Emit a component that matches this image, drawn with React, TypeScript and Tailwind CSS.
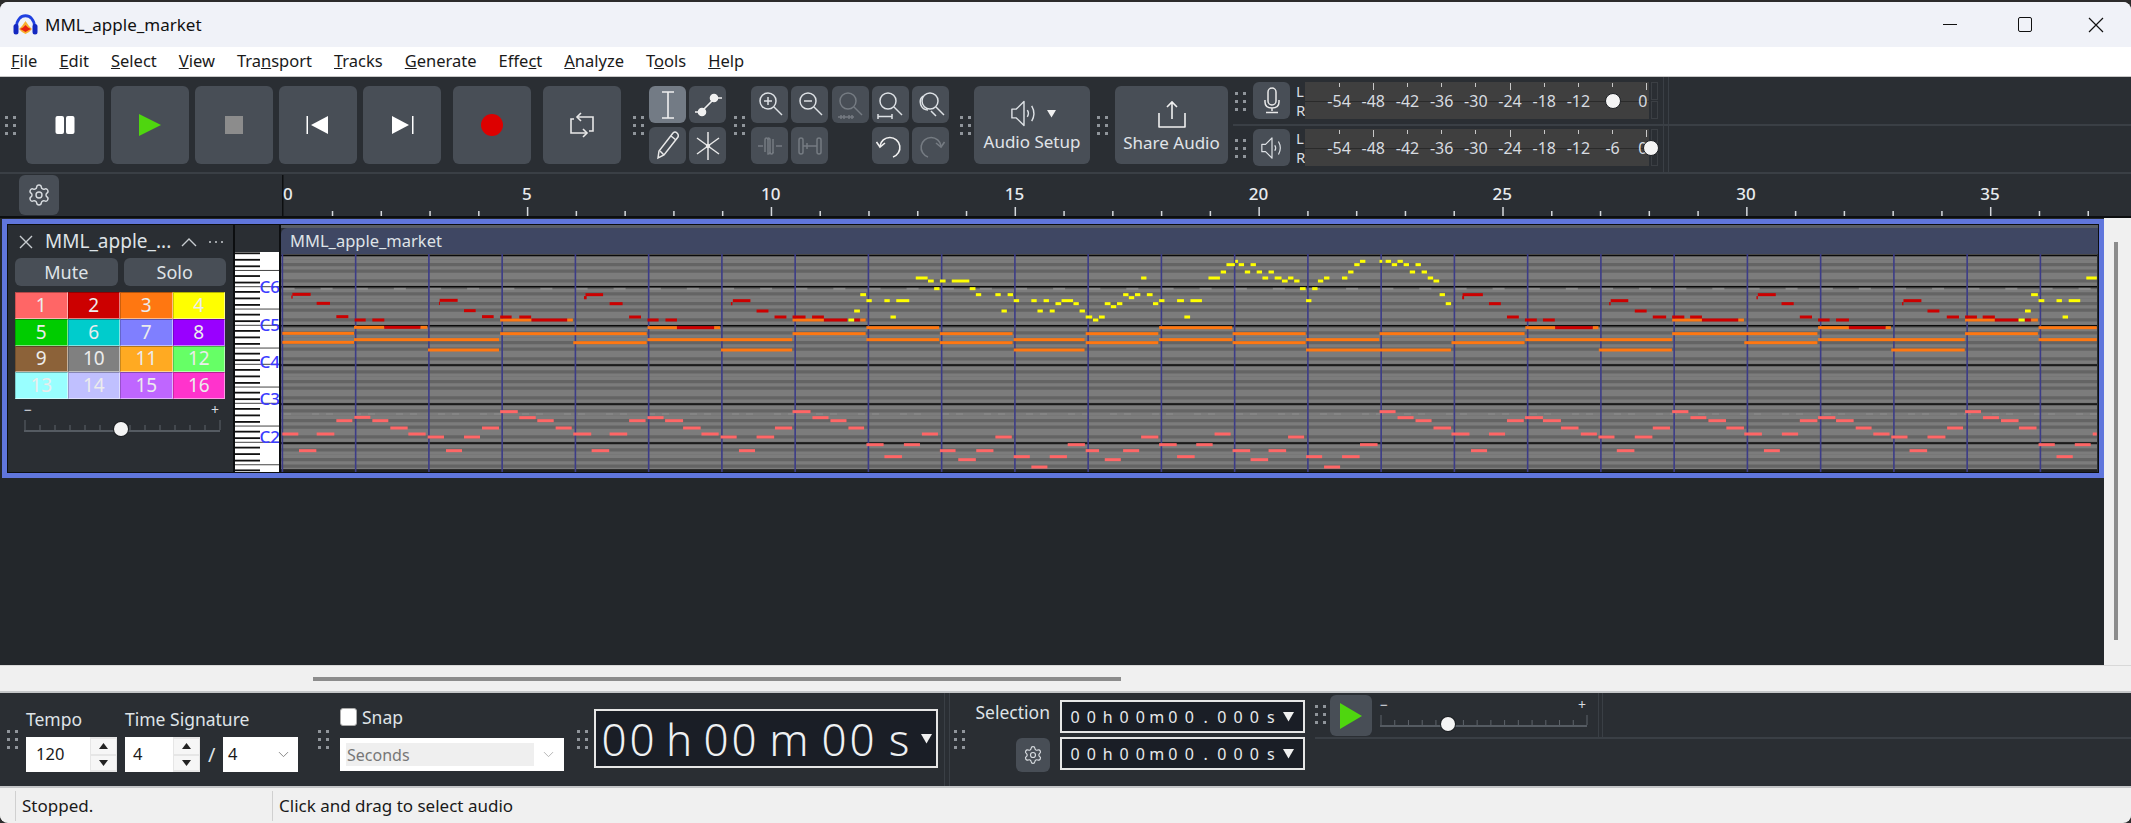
import React from "react";
import { ChevronDown, Settings } from "lucide-react";

type N = number[];
const conv = (list: N[], ox: number, sx: number, oy: number) =>
  list.map(([a, b, y]) => ({ x: ox + a / sx - 282, w: (b - a) / sx, y: oy + y / 3 - 254 }));

const RED = [
  ...conv([[880,935,238],[953,993,265],[1012,1048,305],[1067,1100,315],[1120,1156,315],[1156,1264,337],[1322,1376,256],[1395,1430,287],[1449,1484,305]],0,3,215),
  ...conv([[3,33,291],[53,84,291],[85,178,300],[226,272,224],[289,323,251],[340,371,291],[388,417,300],[435,465,300],[465,562,323],[611,657,242],[673,704,273],[720,751,291],[767,801,291],[818,849,291],[849,910,300],[928,943,300]],500,2.613,220),
  ...conv([[950,1003,224],[1019,1050,251],[1066,1097,291],[1113,1144,300],[1160,1191,300],[1192,1290,323],[1337,1383,242],[1400,1431,273],[1447,1482,291]],1100,2.613,220),
  ...conv([[216,252,291],[269,304,291],[304,411,300],[469,522,224],[539,575,251],[593,629,291],[647,681,300],[700,738,300],[738,846,323],[899,952,242],[970,1005,273],[1027,1063,291],[1081,1116,291],[1133,1169,291],[1169,1239,300],[1258,1275,300]],1600,2.953,220),
];
const TAILS = [
  ...conv([[877,881,246],[1320,1323,265]],0,3,215),
  ...conv([[222,229,233],[606,610,251]],500,2.613,220),
  ...conv([[949,954,233],[1333,1337,251]],1100,2.613,220),
  ...conv([[465,469,233],[895,899,251]],1600,2.953,220),
];
const ORANGE = [
  ...conv([[850,1065,355],[850,1065,382],[1065,1156,337],[1264,1285,337],[1065,1500,374],[1287,1500,405]],0,3,215),
  ...conv([[3,85,300],[178,193,300],[3,386,341],[194,386,368],[388,465,323],[562,578,323],[388,766,359],[580,766,390],[767,849,300],[944,958,300],[767,958,341],[960,1150,323],[960,1150,359],[1152,1342,341],[1152,1342,368],[1345,1530,359],[1345,1530,390],[1533,1568,341],[1533,1568,368]],500,2.613,220),
  ...conv([[0,155,341],[0,155,368],[157,348,323],[157,348,359],[349,540,341],[349,540,368],[541,732,359],[541,920,390],[733,1112,341],[921,1112,368],[1114,1192,323],[1290,1305,323],[1114,1497,359],[1306,1497,390]],1100,2.613,220),
  ...conv([[216,304,300],[411,428,300],[216,645,341],[429,645,368],[647,738,323],[846,862,323],[647,1080,359],[863,1080,390],[1081,1169,300],[1276,1296,300],[1081,1296,341],[1298,1470,323],[1298,1470,359]],1600,2.953,220),
];
const YELLOW = [
  ...conv([[913,928,300],[928,943,273],[944,959,224],[960,974,242],[1007,1021,242],[1023,1037,291],[1038,1072,242],[1089,1120,174],[1121,1136,183],[1137,1151,206],[1152,1167,183],[1183,1229,183],[1230,1245,206],[1246,1260,224],[1297,1311,224],[1313,1327,273],[1329,1343,224],[1345,1359,242],[1391,1405,242],[1407,1421,273],[1423,1437,242],[1439,1452,273],[1454,1469,251],[1470,1500,242],[1501,1515,251],[1517,1531,273],[1533,1550,291],[1552,1566,300]],500,2.613,220),
  ...conv([[0,15,291],[15,30,251],[31,45,260],[47,61,251],[63,77,224],[78,92,233],[94,108,224],[110,124,174],[125,140,224],[141,155,251],[157,171,242],[204,222,242],[223,238,291],[239,269,242],[286,316,174],[318,332,156],[333,355,134],[356,363,124],[365,379,134],[381,395,156],[396,410,134],[412,426,156],[427,442,174],[443,457,156],[459,477,174],[478,493,183],[494,508,174],[510,524,183],[525,540,206],[541,555,242],[557,571,206],[572,586,183],[588,602,174],[635,649,174],[651,665,156],[667,681,134],[682,696,124],[733,740,124],[749,763,124],[765,779,134],[780,794,124],[796,810,134],[812,826,156],[827,841,134],[843,857,156],[859,873,174],[874,889,183],[890,904,224],[906,920,251]],1100,2.613,220),
  ...conv([[1239,1257,300],[1258,1275,273],[1276,1296,224],[1298,1315,242],[1351,1367,242],[1369,1385,291],[1387,1421,242],[1439,1470,174]],1600,2.953,220),
];
const SALMON = [
  ...conv([[850,898,657],[900,952,707],[953,1006,657],[1012,1060,617],[1066,1114,607],[1120,1168,617],[1174,1226,639],[1228,1280,657],[1286,1335,666],[1341,1389,707],[1395,1443,666],[1449,1500,639]],0,3,215),
  ...conv([[3,49,575],[53,96,593],[100,143,602],[148,190,624],[194,241,642],[242,288,692],[289,335,642],[340,383,602],[388,430,593],[434,481,602],[481,527,624],[529,574,642],[579,621,651],[627,669,692],[673,719,651],[721,766,624],[767,814,575],[819,861,593],[866,908,602],[913,954,624],[960,1005,674],[1007,1053,710],[1058,1100,674],[1105,1147,642],[1152,1193,692],[1200,1246,719],[1247,1292,692],[1297,1340,651],[1345,1387,710],[1391,1433,741],[1439,1484,710],[1486,1531,674],[1533,1568,692]],500,2.613,220),
  ...conv([[15,57,719],[63,105,692],[110,155,651],[157,203,674],[204,250,710],[254,297,674],[302,344,642],[349,395,692],[396,442,719],[443,489,692],[494,536,651],[541,583,710],[588,630,741],[635,681,710],[682,728,674],[733,775,575],[780,822,593],[827,869,602],[874,920,624],[921,968,642],[972,1014,692],[1019,1061,642],[1066,1110,602],[1113,1160,593],[1160,1207,602],[1207,1253,624],[1259,1301,642],[1305,1347,651],[1353,1399,692],[1400,1446,651],[1447,1492,624]],1100,2.613,220),
  ...conv([[216,264,575],[270,317,593],[323,375,602],[376,428,624],[429,481,642],[487,534,692],[540,588,642],[593,645,602],[647,698,593],[700,752,602],[758,805,624],[810,858,642],[863,911,651],[917,969,692],[970,1023,651],[1028,1075,624],[1081,1128,575],[1134,1181,593],[1187,1239,602],[1240,1292,624],[1298,1346,674],[1351,1399,710],[1405,1452,674],[1458,1470,642]],1600,2.953,220),
];

const STROKE = "#dde1e5";
const DIM = "#757b82";

function Gripper({ className = "" }: { className?: string }) {
  return (
    <div className={`grid w-[11px] shrink-0 grid-cols-2 gap-x-[5px] gap-y-[5px] self-start ${className}`}>
      {[0, 1, 2, 3, 4, 5].map((i) => (
        <div key={i} className="h-[3px] w-[3px] bg-[#90959b]" />
      ))}
    </div>
  );
}

function Btn({ children, className = "" }: { children?: React.ReactNode; className?: string }) {
  return <div className={`flex shrink-0 items-center justify-center rounded-md bg-[#484e56] ${className}`}>{children}</div>;
}

const Logo = () => (
  <svg width="25" height="21" viewBox="0 0 25 21">
    <path d="M3.500 13C3.500-2 21.500-2 21.500 13" fill="none" stroke="#2040e0" strokeWidth="2.800" />
    <rect x="0.500" y="10" width="5" height="10.500" rx="2.500" fill="#1428c0" />
    <rect x="19.500" y="10" width="5" height="10.500" rx="2.500" fill="#1428c0" />
    <path d="M6 15l3-3 3.500-5 3.500 5 3 3-3 3-3.500 2-3.500-2z" fill="#f8b030" />
    <path d="M7 15l3-1.500 2.500-2.500 2.500 2.500 3 1.500-3 1.500-2.500 1.500-2.500-1.500z" fill="#e82010" />
  </svg>
);

const Speaker = ({ color = STROKE, w = 26, h = 30 }: { color?: string; w?: number; h?: number }) => (
  <svg width={w} height={h} viewBox="0 0 26 30" fill="none" stroke={color} strokeWidth="1.300">
    <path d="M2 11h4l7-7v22l-7-7H2z" strokeLinejoin="round" />
    <path d="M16 12q2 3 0 6" />
    <path d="M20 8q4 7 0 14" />
  </svg>
);

const Mag = ({ children, color = STROKE }: { children?: React.ReactNode; color?: string }) => (
  <svg width="28" height="30" viewBox="0 0 28 30" fill="none" stroke={color} strokeWidth="1.500">
    <circle cx="12" cy="11" r="8" />
    <path d="M18 17l8 8" />
    {children}
  </svg>
);

function NoteGrid() {
  const W = 1816;
  const H = 218;
  const lines = [0.7, 32, 71, 110.3, 149.300, 188.300, 215.300];
  const rows: number[] = [];
  const blackFromBottom = new Set([1, 3, 6, 8, 10]);
  for (let i = 0; i < 68; i++) {
    const semi = ((i % 12) + 12) % 12;
    if (!blackFromBottom.has(semi)) rows.push(H - 3.25 * (i + 1) - 1);
  }
  const bars: number[] = [];
  for (let k = 0; k < 25; k++) bars.push(0.6 + 73.25 * k);
  const patchesA: number[] = [];
  bars.forEach((b) => {
    patchesA.push(b + 1, b + 39);
  });
  const patchesB: number[] = [];
  for (let x = 3; x < W; x += 14) if (Math.floor(x / 14) % 3 !== 1) patchesB.push(x);
  return (
    <svg width={W} height={H} className="block">
      <rect width={W} height={H} fill="#646464" />
      {rows.map((y, i) => (
        <rect key={i} x="0" y={y} width={W} height="3.25" fill="#7c7c7c" />
      ))}
      {patchesA.map((x, i) => (
        <rect key={i} x={x} y="33.500" width="12" height="2.500" fill="#8a8a8a" />
      ))}
      {patchesB.map((x, i) => (
        <rect key={i} x={x} y="159" width="7" height="2" fill="#858585" />
      ))}
      {lines.map((y, i) => (
        <rect key={i} x="0" y={y} width={W} height="1.500" fill="#0a0a0a" />
      ))}
      <rect x="0" y="216.500" width={W} height="1.500" fill="#222" />
      {bars.map((x, i) => (
        <rect key={i} x={x} y="0" width="1.600" height={H} fill="#3c3c88" />
      ))}
      {ORANGE.map((n, i) => (
        <rect key={i} x={n.x} y={n.y - 1.5} width={n.w} height="3" fill="#ff7711" />
      ))}
      {RED.map((n, i) => (
        <rect key={i} x={n.x} y={n.y - 1.5} width={n.w} height="3" fill="#cc0000" />
      ))}
      {TAILS.map((n, i) => (
        <rect key={i} x={n.x} y={n.y - 1.6} width={n.w} height="3.200" fill="#cc0000" />
      ))}
      {SALMON.map((n, i) => (
        <rect key={i} x={n.x} y={n.y - 1.5} width={n.w} height="3" fill="#ff6666" />
      ))}
      {YELLOW.map((n, i) => (
        <rect key={i} x={n.x} y={n.y - 1.5} width={n.w} height="3" fill="#ffff00" />
      ))}
    </svg>
  );
}

function Piano() {
  const blacks: number[] = [];
  const seps: number[] = [];
  const octs = [34.700, 73.300, 112.300, 151.300, 190.300, 229];
  octs.forEach((b) => {
    [1, 3, 6, 8, 10].forEach((s) => blacks.push(b - s * 3.25 - 1.8));
    seps.push(b - 0.5, b - 5 * 3.25 - 0.5);
  });
  const labels = [
    ["C6", 41],
    ["C5", 79],
    ["C4", 116],
    ["C3", 153],
    ["C2", 191],
  ] as [string, number][];
  return (
    <svg width="45" height="220" className="block">
      <rect width="45" height="220" fill="#fff" />
      {seps.map((y, i) => (
        <rect key={i} x="0" y={y} width="45" height="1" fill="#444" />
      ))}
      {blacks.map((y, i) => (
        <rect key={i} x="0" y={y} width="25" height="1.800" fill="#111" />
      ))}
      {labels.map(([t, y]) => (
        <text key={t} x="45" y={y} textAnchor="end" fontSize="17" fontWeight="500" fill="#3c3cff" fontFamily="Noto Sans, sans-serif">
          {t}
        </text>
      ))}
    </svg>
  );
}

function Slider({ width, thumb, count }: { width: number; thumb: number; count: number }) {
  const ticks: number[] = [];
  for (let i = 0; i < count; i++) ticks.push(0.5 + (i * (width - 1)) / (count - 1));
  return (
    <svg width={width + 6} height="39" className="block">
      <g transform="translate(3,6)">
        <text x="0" y="10" fontSize="14" fill="#d8dce0" fontFamily="Noto Sans, sans-serif">−</text>
        <text x={width - 9} y="10" fontSize="14" fill="#d8dce0" fontFamily="Noto Sans, sans-serif">+</text>
        {ticks.map((x, i) => (
          <rect key={i} x={x} y={i === 0 || i === count - 1 ? 15 : 20} width="1" height={i === 0 || i === count - 1 ? 10 : 5} fill="#5d636a" />
        ))}
        <rect x="0" y="25" width={width} height="2" fill="#555b62" />
        <circle cx={thumb} cy="24" r="8" fill="#1d2024" />
        <circle cx={thumb} cy="24" r="7" fill="#f4f4f4" />
      </g>
    </svg>
  );
}

function Meter({ thumb, labels, icon }: { thumb: string; labels: (string | null)[]; icon: React.ReactNode }) {
  return (
    <div className="flex items-center">
      {icon}
      <div className="ml-[6px] flex h-[37px] w-[8px] flex-col justify-between text-[15px] leading-[18px] text-[#d8dce0]">
        <span>L</span>
        <span>R</span>
      </div>
      <div className="relative ml-px flex h-[37px] w-[344px] bg-[#3f3f3f] pl-[17px]">
        <div className="absolute left-0 right-0 top-[19px] h-px bg-[#2a2a2a]" />
        {labels.map((l, i) => (
          <div key={i} className="relative flex w-[34.200px] shrink-0 flex-col items-center">
            <div className={i === 1 || i === 5 || i === 9 ? "mt-[1px] h-[7px] w-px bg-[#c8c8c8]" : "mt-[1px] h-[4px] w-px bg-[#c8c8c8]"} />
            <div className={`text-[16px] leading-[18px] text-[#d8dce0] ${i === 1 || i === 5 || i === 9 ? "mt-[2px]" : "mt-[5px]"} ${i === 9 ? "mr-[8px]" : ""}`}>{l}</div>
          </div>
        ))}
        <div className={`absolute top-[11px] h-[16px] w-[16px] rounded-full border border-[#1d2024] bg-[#f4f4f4] ${thumb}`} />
      </div>
      <div className="ml-[2px] flex h-[37px] w-[7px] flex-col gap-[1px]">
        <div className="flex-1 border border-[#3b3f44]" />
        <div className="flex-1 border border-[#3b3f44]" />
      </div>
    </div>
  );
}

function Tri({ size = 10, className = "" }: { size?: number; className?: string }) {
  return (
    <svg width={size} height={size} viewBox="0 0 10 10" className={className}>
      <path d="M0 1h10L5 9.500z" fill="#f0f0f0" />
    </svg>
  );
}

function Spin() {
  return (
    <div className="flex h-full w-[27px] flex-col gap-[2px] bg-[#e6e6e6] px-[1px] py-[2px]">
      {[0, 1].map((i) => (
        <div key={i} className="flex flex-1 items-center justify-center bg-[#f6f6f6]">
          <svg width="9" height="6" viewBox="0 0 9 6">
            <path d={i === 0 ? "M0 6h9L4.500 0z" : "M0 0h9L4.500 6z"} fill="#222" />
          </svg>
        </div>
      ))}
    </div>
  );
}

function SmallTime() {
  const chars = "00h00m00.000s".split("");
  return (
    <div className="flex h-[33px] w-[245px] items-center border-2 border-[#e6e6e6] bg-[#1a1e26] pl-[5px]">
      {chars.map((c, i) => (
        <span key={i} className="w-[16.300px] text-center text-[16px] leading-none text-[#e8eaec]">
          {c}
        </span>
      ))}
      <Tri size={11} className="ml-[4px]" />
    </div>
  );
}

const CHANNELS: [string, string][] = [
  ["1", "bg-[#ff6666]"], ["2", "bg-[#cc0000]"], ["3", "bg-[#ff7711]"], ["4", "bg-[#ffff00]"],
  ["5", "bg-[#00cc00]"], ["6", "bg-[#00cccc]"], ["7", "bg-[#7f7fff]"], ["8", "bg-[#9900ff]"],
  ["9", "bg-[#8c6239]"], ["10", "bg-[#808080]"], ["11", "bg-[#ffaa22]"], ["12", "bg-[#66ff66]"],
  ["13", "bg-[#99ffff]"], ["14", "bg-[#c0c0ff]"], ["15", "bg-[#bf66ff]"], ["16", "bg-[#ff33cc]"],
];

const MENU: [string, string, string][] = [
  ["", "F", "ile"], ["", "E", "dit"], ["", "S", "elect"], ["", "V", "iew"], ["Tra", "n", "sport"],
  ["", "T", "racks"], ["", "G", "enerate"], ["Effe", "c", "t"], ["", "A", "nalyze"], ["T", "o", "ols"], ["", "H", "elp"],
];

const LARGE: [string, string][] = [
  ["0", "w-[28px]"], ["0", "w-[28px]"], ["h", "w-[46px]"], ["0", "w-[28px]"], ["0", "w-[28px]"],
  ["m", "w-[62px]"], ["0", "w-[28px]"], ["0", "w-[28px]"], ["s", "w-[46px]"],
];

export default function App() {
  const bars = Array.from({ length: 38 }, (_, i) => i);
  return (
    <div className="h-[823px] w-[2131px] overflow-hidden bg-[#2c2c2c] pt-[2px] font-['Noto_Sans',sans-serif] text-[16px]">
      <div className="flex h-[821px] flex-col overflow-hidden rounded-lg bg-[#f0f0f0]">
        {/* title */}
        <div className="flex h-[45px] shrink-0 items-center bg-[#f0f2f8] pl-[13px] text-[#111]">
          <Logo />
          <span className="ml-[7px] text-[17px]">MML_apple_market</span>
          <div className="ml-auto flex items-center">
            <div className="mr-[61px] h-[1.500px] w-[14px] bg-[#111]" />
            <div className="mr-[56px] h-[15px] w-[14px] rounded-[2px] border-[1.500px] border-[#111]" />
            <svg width="16" height="16" viewBox="0 0 16 16" className="mr-[27px]">
              <path d="M1 1l14 14M15 1L1 15" stroke="#111" strokeWidth="1.200" />
            </svg>
          </div>
        </div>
        {/* menu */}
        <div className="flex h-[30px] shrink-0 items-center gap-[22px] border-b border-[#c8c8c8] bg-white pl-[11px] text-[16.500px] text-[#1a1a1a]">
          {MENU.map(([a, b, c]) => (
            <span key={a + b + c}>
              {a}
              <u>{b}</u>
              {c}
            </span>
          ))}
        </div>
        {/* top toolbar */}
        <div className="flex h-[97px] shrink-0 border-b-2 border-[#3a3f45] bg-[#2a2e33] text-[#e0e4e8]">
          <div className="flex items-start pt-[9px]">
            <Gripper className="ml-[5px] mt-[30px]" />
            <Btn className="ml-[10px] h-[78px] w-[78px]">
              <svg width="20" height="20" viewBox="0 0 20 20">
                <rect x="0.500" y="1" width="8.500" height="18" rx="2" fill="#fff" />
                <rect x="11" y="1" width="8.500" height="18" rx="2" fill="#fff" />
              </svg>
            </Btn>
            <Btn className="ml-[7px] h-[78px] w-[78px]">
              <svg width="24" height="24" viewBox="0 0 24 24">
                <path d="M1 1l22 11L1 23z" fill="#4fd60f" />
              </svg>
            </Btn>
            <Btn className="ml-[6px] h-[78px] w-[78px]">
              <div className="h-[18px] w-[18px] bg-[#8c8c8c]" />
            </Btn>
            <Btn className="ml-[6px] h-[78px] w-[78px]">
              <svg width="24" height="20" viewBox="0 0 24 20">
                <rect x="0.500" y="1" width="1.500" height="18" fill="#fff" />
                <path d="M22 1v18L5 10z" fill="#fff" />
              </svg>
            </Btn>
            <Btn className="ml-[6px] h-[78px] w-[78px]">
              <svg width="24" height="20" viewBox="0 0 24 20">
                <rect x="22" y="1" width="1.500" height="18" fill="#fff" />
                <path d="M2 1v18l17-9z" fill="#fff" />
              </svg>
            </Btn>
            <Btn className="ml-[12px] h-[78px] w-[78px]">
              <div className="h-[22px] w-[22px] rounded-full bg-[#dd0000]" />
            </Btn>
            <Btn className="ml-[12px] h-[78px] w-[78px]">
              <svg width="24" height="26" viewBox="0 0 24 26" fill="none" stroke="#e8e8e8" strokeWidth="1.600">
                <path d="M8 5h15v14h-4M16 21H1V7h3" />
                <path d="M11 1L7 5l4 4M13 17l4 4-4 4" />
              </svg>
            </Btn>
            <Gripper className="ml-[12px] mt-[30px]" />
            {/* tools */}
            <div className="ml-[5px] grid grid-cols-[37px_37px] gap-x-[3px] gap-y-[4px]">
              <Btn className="h-[37px] bg-[#737b85]">
                <svg width="16" height="30" viewBox="0 0 16 30" fill="none" stroke="#f0f0f0" strokeWidth="1.600">
                  <path d="M2 2h12M2 28h12M8 2v26" />
                </svg>
              </Btn>
              <Btn className="h-[37px]">
                <svg width="30" height="30" viewBox="0 0 30 30" fill="none" stroke="#f0f0f0" strokeWidth="1.600">
                  <path d="M2 22h6l14-14h7" />
                  <circle cx="9" cy="22" r="3.500" fill="#f0f0f0" />
                  <circle cx="21" cy="8" r="3.500" fill="#f0f0f0" />
                </svg>
              </Btn>
              <Btn className="h-[37px]">
                <svg width="26" height="32" viewBox="0 0 26 32" fill="none" stroke="#e8e8e8" strokeWidth="1.500">
                  <path d="M3 28l1-7L18 3q2-2 4 0t1 4L9 25l-6 3z" />
                  <path d="M5 21l4 4M16 6l5 4" />
                </svg>
              </Btn>
              <Btn className="h-[37px]">
                <svg width="26" height="32" viewBox="0 0 26 32" fill="none" stroke="#e8e8e8" strokeWidth="1.500">
                  <path d="M13 2v28M2 8l22 16M24 8L2 24" />
                  <circle cx="13" cy="16" r="1.500" fill="#e8e8e8" />
                </svg>
              </Btn>
            </div>
            <Gripper className="ml-[8px] mt-[30px]" />
            {/* zoom */}
            <div className="ml-[6px] grid grid-cols-[37px_37px_37px_37px_37px] gap-x-[3.250px] gap-y-[4px]">
              <Btn className="h-[37px]">
                <Mag>
                  <path d="M12 7v8M8 11h8" />
                </Mag>
              </Btn>
              <Btn className="h-[37px]">
                <Mag>
                  <path d="M8 11h8" />
                </Mag>
              </Btn>
              <Btn className="h-[37px]">
                <Mag color={DIM}>
                  <path d="M2 27h16M5 25v4M8 25v4M13 25v4M16 25v4" />
                </Mag>
              </Btn>
              <Btn className="h-[37px]">
                <Mag>
                  <path d="M2 24v5M2 26.500h14M16 24v5" />
                </Mag>
              </Btn>
              <Btn className="h-[37px]">
                <svg width="30" height="30" viewBox="0 0 30 30" fill="none" stroke={STROKE} strokeWidth="1.500">
                  <circle cx="14" cy="11" r="8" />
                  <path d="M7 6a8 8 0 0 0 5 14M20 17l8 8M15 21l5 5" />
                </svg>
              </Btn>
              <Btn className="h-[37px]">
                <svg width="26" height="20" viewBox="0 0 26 20" fill="none" stroke={DIM} strokeWidth="1.500">
                  <path d="M1 10h5M8 4v12M11 2v16q2 0 2-2V4q0-2-2-2M16 3v14M19 10h6" />
                  <path d="M8 4q0-2 1.500-2T11 4M13 16q0 2 1.500 2T16 16" />
                </svg>
              </Btn>
              <Btn className="h-[37px]">
                <svg width="26" height="20" viewBox="0 0 26 20" fill="none" stroke={DIM} strokeWidth="1.500">
                  <rect x="2" y="2" width="4" height="16" rx="2" />
                  <rect x="20" y="2" width="4" height="16" rx="2" />
                  <path d="M6 10h14M10 7v6" />
                </svg>
              </Btn>
              <div />
              <Btn className="h-[37px]">
                <svg width="28" height="28" viewBox="0 0 28 28" fill="none" stroke="#f0f0f0" strokeWidth="1.600">
                  <path d="M4 14a10 10 0 1 1 13 11" />
                  <path d="M0.500 10L4 15l5-4" />
                </svg>
              </Btn>
              <Btn className="h-[37px]">
                <svg width="28" height="28" viewBox="0 0 28 28" fill="none" stroke={DIM} strokeWidth="1.600">
                  <path d="M24 14a10 10 0 1 0-13 11" />
                  <path d="M27.500 10L24 15l-5-4" />
                </svg>
              </Btn>
            </div>
            <Gripper className="ml-[11px] mt-[30px]" />
            <Btn className="ml-[3px] h-[78px] w-[116px] flex-col pb-[3px]">
              <div className="flex items-center gap-[8px]">
                <Speaker w={30} h={33} />
                <Tri size={9} />
              </div>
              <span className="mt-[3px] whitespace-nowrap text-[17px] leading-none">Audio Setup</span>
            </Btn>
            <Gripper className="ml-[7px] mt-[30px]" />
            <Btn className="ml-[7px] h-[78px] w-[113px] flex-col">
              <svg width="28" height="30" viewBox="0 0 28 30" fill="none" stroke="#f0f0f0" strokeWidth="1.600">
                <path d="M14 20V4M9 8l5-5 5 5" />
                <path d="M1 14v14h26V14" strokeLinejoin="round" />
              </svg>
              <span className="mt-[5px] whitespace-nowrap text-[17px] leading-none">Share Audio</span>
            </Btn>
          </div>
          {/* meters */}
          <div className="ml-[5px] flex flex-1 flex-col">
            <div className="flex h-[49px] border-b-2 border-[#3a3f45] pl-[2px] pt-[5px]">
              <div className="flex items-center self-start">
                <Gripper className="mr-[7px] mt-[10px]" />
                <Meter
                  thumb="left-[300px]"
                  labels={["-54", "-48", "-42", "-36", "-30", "-24", "-18", "-12", null, "0"]}
                  icon={
                    <Btn className="h-[37px] w-[37px]">
                      <svg width="20" height="28" viewBox="0 0 20 28" fill="none" stroke="#e8e8e8" strokeWidth="1.500">
                        <rect x="6" y="1" width="8" height="17" rx="4" />
                        <path d="M3 13v2q0 6 7 6t7-6v-2M10 21v3M4 25.500h12" />
                      </svg>
                    </Btn>
                  }
                />
              </div>
              <div className="-mt-[5px] ml-[5px] mb-0 h-[49px] w-[6px] border-x border-[#3a3f45]" />
            </div>
            <div className="flex h-[46px] pl-[2px] pt-[3px]">
              <div className="flex items-center self-start">
                <Gripper className="mr-[7px] mt-[10px]" />
                <Meter
                  thumb="left-[338px]"
                  labels={["-54", "-48", "-42", "-36", "-30", "-24", "-18", "-12", "-6", "0"]}
                  icon={
                    <Btn className="h-[37px] w-[37px]">
                      <Speaker w={24} h={28} />
                    </Btn>
                  }
                />
              </div>
              <div className="-mt-[3px] ml-[5px] h-[46px] w-[6px] border-x border-[#3a3f45]" />
            </div>
          </div>
        </div>
        {/* ruler */}
        <div className="flex h-[44px] shrink-0 border-b-2 border-[#0c0e10] bg-[#2a2e33]">
          <Btn className="ml-[19px] mt-px h-[40px] w-[40px]">
            <Settings size={24} strokeWidth={1.400} color="#d8dce0" />
          </Btn>
          <svg width="1849" height="42" className="ml-[223px] block">
            <rect x="0" y="1" width="1.500" height="41" fill="#0c0e10" />
            {bars.map((t) => {
              const x = 1 + t * 48.77;
              const major = t % 5 === 0;
              return (
                <g key={t}>
                  {t > 0 && <rect x={x} y={major ? 33 : 37} width="1.500" height={major ? 9 : 5} fill="#d5d8dc" />}
                  {major && (
                    <text x={t === 0 ? 1 : x} y="26" textAnchor={t === 0 ? "start" : "middle"} fontSize="17" fontWeight="500" fill="#e8ebee" fontFamily="Noto Sans, sans-serif">
                      {t}
                    </text>
                  )}
                </g>
              );
            })}
          </svg>
        </div>
        {/* main */}
        <div className="flex h-[447px] shrink-0">
          <div className="w-[2104px] bg-[#23272b] pt-px">
            <div className="ml-[2px] h-[259px] w-[2102px] border-[5px] border-[#6076dc]">
              <div className="flex h-full border border-[#0c0e10] bg-[#2a2e33]">
                {/* control panel */}
                <div className="flex w-[225px] shrink-0 flex-col px-[7px]">
                  <div className="flex h-[33px] items-center pl-[4px] text-[#dfe3e7]">
                    <svg width="14" height="14" viewBox="0 0 14 14">
                      <path d="M1 1l12 12M13 1L1 13" stroke="#c8ccd0" strokeWidth="1.400" />
                    </svg>
                    <span className="ml-[12px] w-[130px] text-[19px] leading-none whitespace-nowrap">MML_apple_...</span>
                    <svg width="16" height="10" viewBox="0 0 16 10" className="ml-[6px]">
                      <path d="M1 9l7-7 7 7" fill="none" stroke="#c8ccd0" strokeWidth="1.400" />
                    </svg>
                    <div className="ml-[12px] flex gap-[4px]">
                      <div className="h-[2px] w-[2px] rounded-full bg-[#c8ccd0]" />
                      <div className="h-[2px] w-[2px] rounded-full bg-[#c8ccd0]" />
                      <div className="h-[2px] w-[2px] rounded-full bg-[#c8ccd0]" />
                    </div>
                  </div>
                  <div className="flex h-[28px] gap-[6px] text-[18px] text-[#dfe3e7]">
                    <div className="flex w-[103px] items-center justify-center rounded-md bg-[#484e56]">Mute</div>
                    <div className="flex w-[103px] items-center justify-center rounded-md bg-[#484e56]">Solo</div>
                  </div>
                  <div className="mt-[6px] grid h-[107px] w-[210px] grid-cols-4 grid-rows-4">
                    {CHANNELS.map(([n, c]) => (
                      <div key={n} className={`flex items-center justify-center border-t border-l border-b border-r border-t-black/30 border-l-black/20 border-r-white/50 border-b-white/50 text-[19px] leading-none text-[#ececec] ${c}`}>
                        {n}
                      </div>
                    ))}
                  </div>
                  <div className="ml-[6px]">
                    <Slider width={196} thumb={97} count={14} />
                  </div>
                </div>
                {/* piano */}
                <div className="h-full w-[48px] shrink-0 border-l-2 border-r-[2px] border-[#0c0e10] pt-[27px]">
                  <div className="h-[220px] overflow-hidden">
                    <Piano />
                  </div>
                </div>
                {/* clip */}
                <div className="flex min-w-0 flex-1 flex-col">
                  <div className="h-[3px] bg-[#595e66]" />
                  <div className="flex h-[26px] items-center rounded-tl-md bg-[#3f4763] pl-[9px] text-[16.500px] text-[#dfe3e7]">MML_apple_market</div>
                  <NoteGrid />
                </div>
              </div>
            </div>
          </div>
          <div className="flex w-[27px] justify-center pt-[24px]">
            <div className="ml-[-4px] h-[398px] w-[4px] bg-[#8c8c8c]" />
          </div>
        </div>
        {/* hscroll */}
        <div className="h-[26px] shrink-0 border-t border-[#d8d8d8] pl-[313px] pt-[11px]">
          <div className="h-[4px] w-[808px] bg-[#8c8c8c]" />
        </div>
        {/* bottom toolbar */}
        <div className="flex h-[97px] shrink-0 border-y-2 border-[#c4c6c8] bg-[#2a2e33] text-[#dfe3e7]">
          <Gripper className="ml-[7px] mt-[37px]" />
          <div className="ml-[8px] w-[91px] pt-[14px]">
            <div className="h-[30px] text-[17.500px] leading-[24px]">Tempo</div>
            <div className="flex h-[35px] w-[91px] bg-white text-[16.500px] text-[#1a1a1a]">
              <div className="flex w-[64px] items-center pl-[10px]">120</div>
              <Spin />
            </div>
          </div>
          <div className="ml-[8px] pt-[14px]">
            <div className="h-[30px] whitespace-nowrap text-[17.500px] leading-[24px]">Time Signature</div>
            <div className="flex h-[35px] items-center">
              <div className="flex h-full w-[75px] bg-white text-[16.500px] text-[#1a1a1a]">
                <div className="flex w-[48px] items-center pl-[8px]">4</div>
                <Spin />
              </div>
              <span className="ml-[8px] w-[15px] text-[20px]">/</span>
              <div className="flex h-full w-[75px] items-center justify-between bg-white pl-[5px] pr-[6px] text-[16.500px] text-[#1a1a1a]">
                4
                <ChevronDown size={17} strokeWidth={1.200} color="#777" />
              </div>
            </div>
          </div>
          <Gripper className="ml-[20px] mt-[37px]" />
          <div className="ml-[11px] w-[224px] pt-[14px]">
            <div className="flex h-[31px] items-start">
              <div className="mt-px h-[18px] w-[17px] rounded-[3px] border border-[#aaa] bg-white" />
              <span className="ml-[5px] text-[17.500px] leading-[20px]">Snap</span>
            </div>
            <div className="flex h-[33px] items-center bg-white pl-[6px] pr-[6px] text-[16px] text-[#777]">
              <div className="flex h-[23px] w-[188px] items-center bg-[#efefef] pl-px">Seconds</div>
              <ChevronDown size={17} strokeWidth={1.200} color="#aaa" className="ml-[6px]" />
            </div>
          </div>
          <Gripper className="ml-[13px] mt-[37px]" />
          <div className="ml-[6px] mt-[16px] flex h-[59px] w-[344px] items-center border-2 border-[#e6e6e6] bg-[#1a1e26] pl-[4px] text-[#eef0f2]">
            {LARGE.map(([c, w], i) => (
              <span key={i} className={`text-center text-[44px] font-light leading-none ${w}`}>
                {c}
              </span>
            ))}
            <Tri size={11} className="-ml-[1px]" />
          </div>
          <div className="ml-[6px] w-[6px] border-x border-[#3a3f45]" />
          <Gripper className="ml-[4px] mt-[37px]" />
          <div className="ml-[9px] flex w-[76px] flex-col items-end pt-[6px]">
            <div className="h-[39px] whitespace-nowrap text-[17.500px] leading-[26px]">Selection</div>
            <Btn className="h-[34px] w-[34px]">
              <Settings size={20} strokeWidth={1.400} color="#d8dce0" />
            </Btn>
          </div>
          <div className="ml-[10px] flex flex-col gap-[4px] pt-[7px]">
            <SmallTime />
            <SmallTime />
          </div>
          <div className="ml-[10px] flex flex-1 flex-col">
            <div className="flex h-[46px] border-b-2 border-[#3a3f45]">
              <Gripper className="mt-[12px]" />
              <Btn className="ml-[4px] mt-[2px] h-[41px] w-[42px]">
                <svg width="22" height="26" viewBox="0 0 22 26">
                  <path d="M0 0l22 13L0 26z" fill="#4fd60f" />
                </svg>
              </Btn>
              <div className="ml-[5px] mt-[1px]">
                <Slider width={207} thumb={68} count={16} />
              </div>
              <div className="ml-[8px] h-[46px] w-[5px] border-x border-[#3a3f45]" />
            </div>
          </div>
        </div>
        {/* status */}
        <div className="flex h-[33px] shrink-0 items-center bg-[#f0f0f0] pt-[3px] text-[17px] text-[#1a1a1a]">
          <div className="ml-[15px] flex h-full w-[257px] items-center border-l border-[#d0d0d0] pl-[6px]">Stopped.</div>
          <div className="flex h-full items-center border-l border-[#d0d0d0] pl-[6px]">Click and drag to select audio</div>
        </div>
      </div>
    </div>
  );
}
